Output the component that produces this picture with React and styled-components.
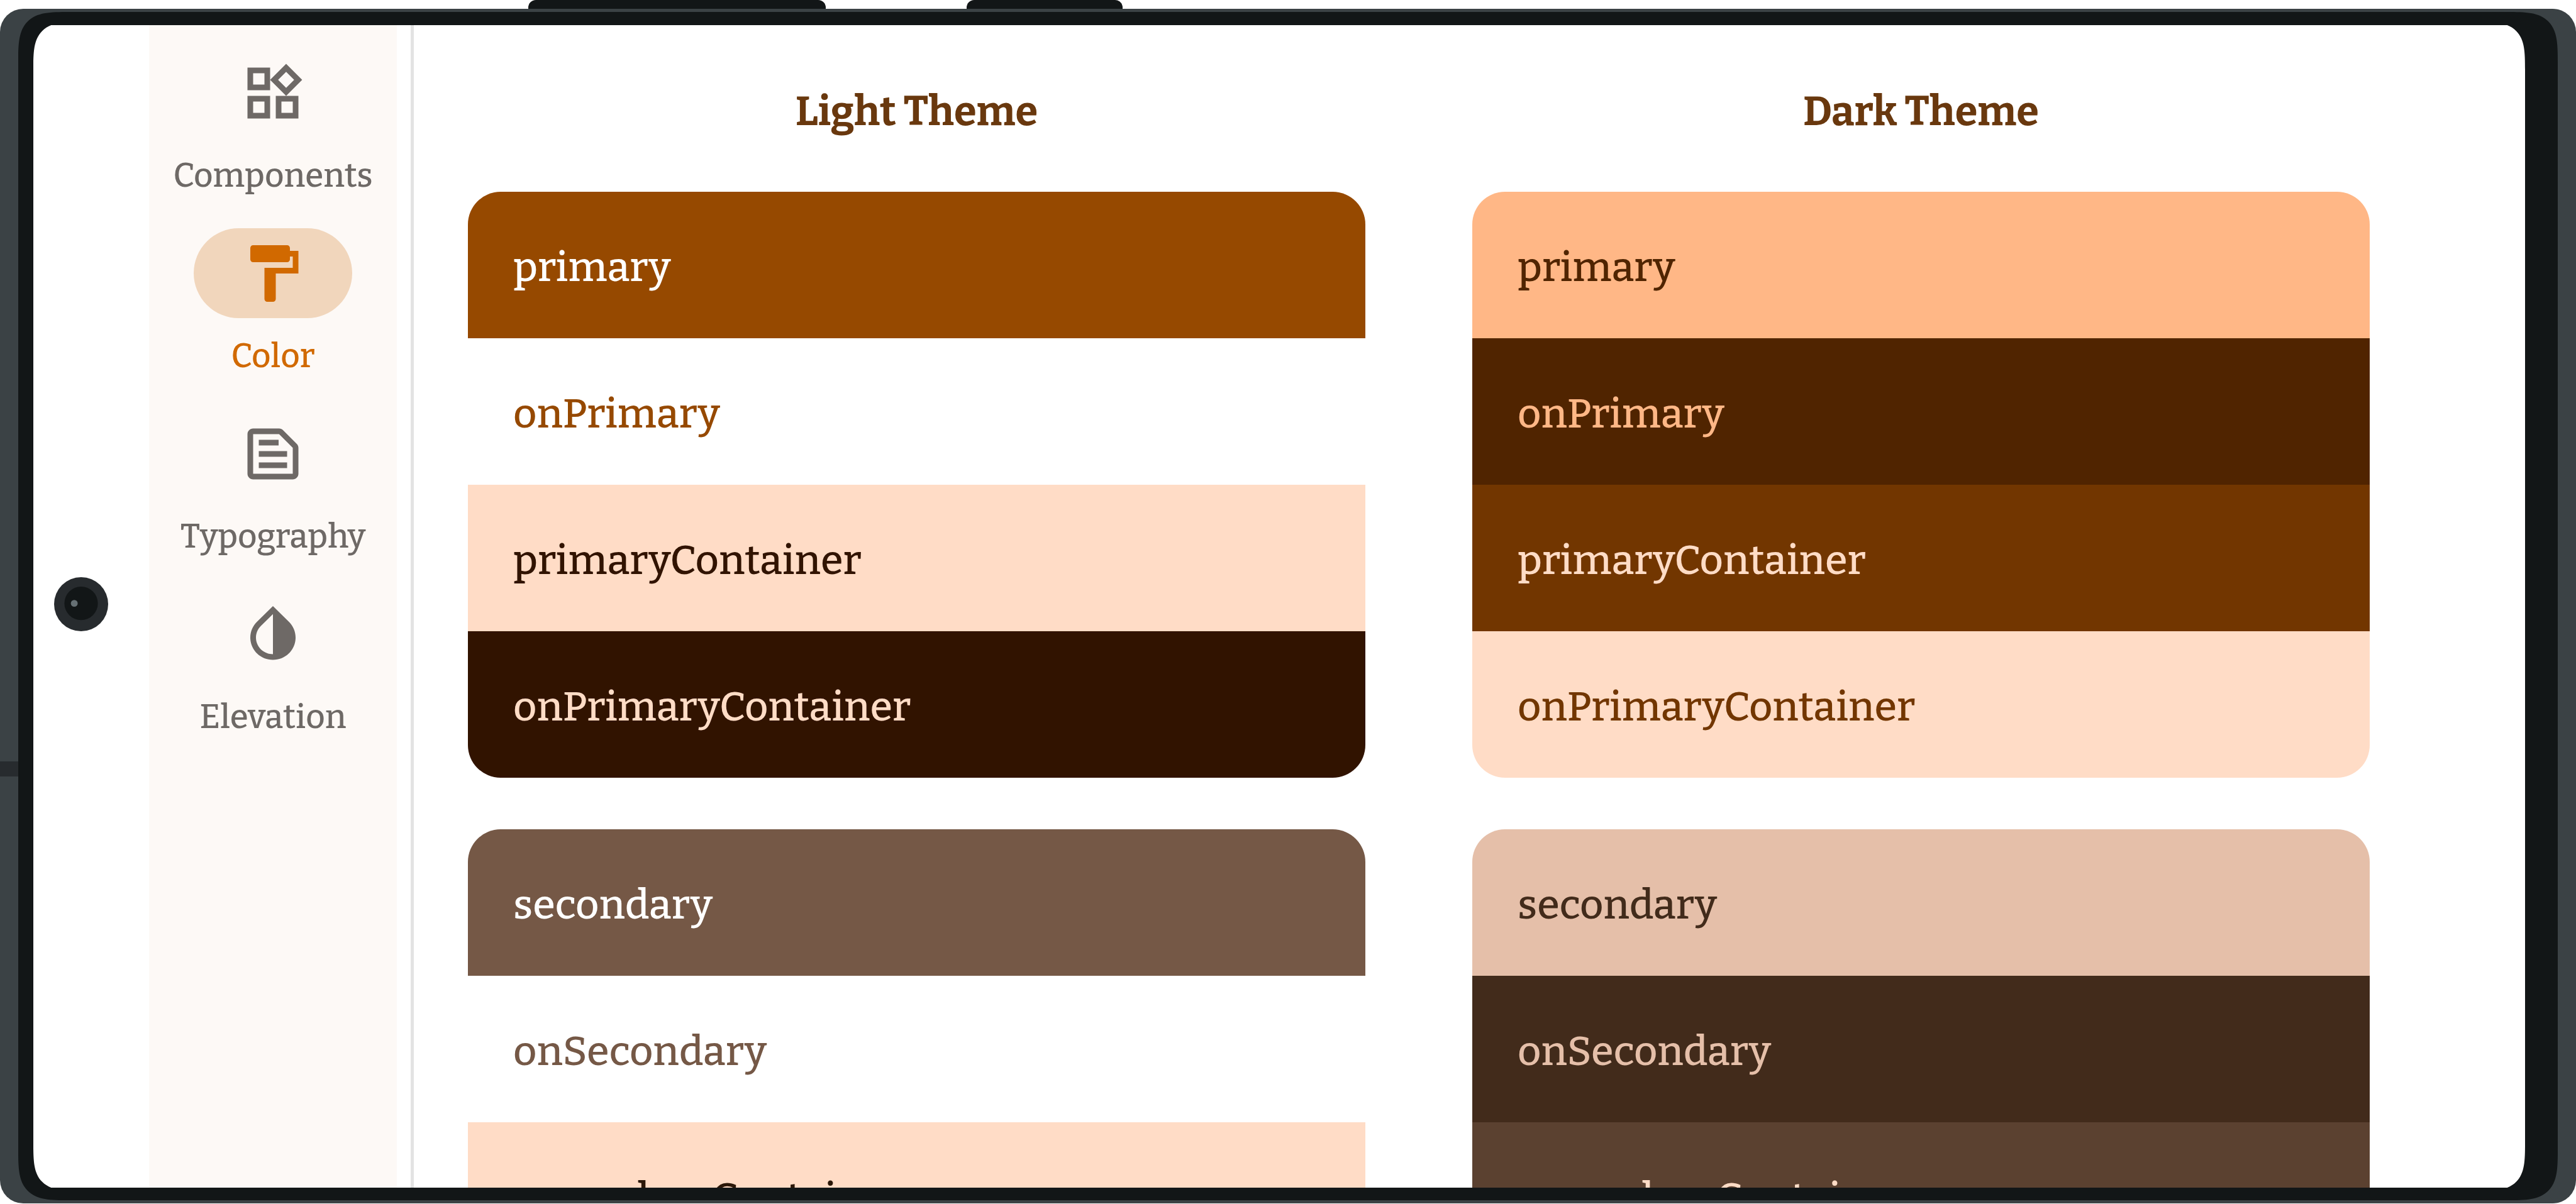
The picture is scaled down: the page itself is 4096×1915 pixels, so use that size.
import React from "react";
import styled, { createGlobalStyle } from "styled-components";

const GlobalStyle = createGlobalStyle`
  *, *::before, *::after { box-sizing: border-box; }
  body {
    margin: 0;
    background: #ffffff;
    font-family: "Roboto Slab", Bitter, "Roboto Serif", "DejaVu Serif", serif;
    font-weight: 500;
  }
`;

/* ---------- Device ---------- */

const Device = styled.div`
  display: flex;
  flex-direction: column;
  height: 100vh;
  overflow: hidden;
  padding-bottom: 1px;
`;

const SideKeys = styled.div`
  display: flex;
  flex: none;
  gap: 224px;
  height: 14px;
  padding-left: 840px;
`;

const SideKey = styled.span`
  width: ${({ $width }) => $width}px;
  border-radius: 12px 12px 0 0;
  background: #121617;
`;

const Frame = styled.div`
  position: relative;
  display: flex;
  flex: 1;
  min-height: 0;
  padding: 5px 29px;
  border-radius: 37px;
  background: #3b4245;
`;

const AntennaBand = styled.span`
  position: absolute;
  top: 63%;
  left: 0;
  width: 29px;
  height: 24px;
  background: #272b2e;
`;

const Bezel = styled.div`
  display: flex;
  flex: 1;
  min-width: 0;
  padding: 21px 52px 20px 24px;
  border-radius: 51px;
  background: #121617;

  @supports (corner-shape: squircle) {
    border-radius: 81px;
    corner-shape: superellipse(1.75);
  }
`;

const Viewport = styled.div`
  display: flex;
  flex: 1;
  min-width: 0;
  overflow: hidden;
`;

const Screen = styled.div`
  display: flex;
  flex: 1;
  min-width: 0;
  margin: -5px 0;
  padding: 5px 0;
  overflow: hidden;
  border-radius: 48px;
  background: #ffffff;

  @supports (corner-shape: squircle) {
    border-radius: 76px;
    corner-shape: superellipse(1.75);
  }
`;

const CameraGutter = styled.div`
  display: flex;
  flex: none;
  align-items: center;
  width: 184px;
  padding: 0 0 8px 33px;
`;

const Camera = () => (
  <svg width="86" height="86" viewBox="0 0 126 126" aria-hidden="true">
    <circle cx="63" cy="63" r="63" fill="#272b2e" />
    <circle cx="63" cy="61" r="39" fill="#121617" />
    <circle cx="47" cy="61" r="8" fill="#667074" />
  </svg>
);

/* ---------- Navigation rail ---------- */

const Rail = styled.nav`
  display: flex;
  flex: none;
  flex-direction: column;
  gap: 48px;
  width: 394px;
  margin: -5px 0;
  padding-top: 41px;
  background: #fdf9f6;
`;

const RailLink = styled.a`
  display: flex;
  flex-direction: column;
  align-items: center;
  gap: 24px;
  color: ${({ $active }) => ($active ? "#d16900" : "#6e6966")};
  font-size: 53px;
  line-height: 72px;
  text-decoration: none;
`;

const Indicator = styled.span`
  display: flex;
  align-items: center;
  justify-content: center;
  width: 252px;
  height: 143px;
  border-radius: 72px;
  background: ${({ $active }) => ($active ? "#f1d6bc" : "transparent")};
`;

const RailIcon = styled.svg`
  width: 108px;
  height: 108px;
  fill: currentColor;
`;

const Divider = styled.div`
  flex: none;
  width: 5px;
  margin: -5px 0 -5px 22px;
  background: #e3e3e3;
`;

/* ---------- Swatches ---------- */

const Content = styled.main`
  display: flex;
  flex: 1;
  align-items: flex-start;
  gap: 170px;
  min-width: 0;
  padding: 0 247px 0 86px;
`;

const Column = styled.section`
  display: flex;
  flex: 1;
  flex-direction: column;
  gap: 82px;
  min-width: 0;
`;

const Title = styled.h2`
  margin: 0;
  padding: 97px 0 6px;
  color: #69380e;
  font-size: 65px;
  font-weight: 700;
  line-height: 80px;
  text-align: center;
`;

const Group = styled.ul`
  margin: 0;
  padding: 0;
  overflow: hidden;
  border-radius: 52px;
  list-style: none;
`;

const Swatch = styled.li`
  display: flex;
  align-items: center;
  height: 233px;
  padding: 6px 72px 0;
  background: ${({ $fill }) => $fill};
  color: ${({ $ink }) => $ink};
  font-size: 65px;
  line-height: 80px;
`;

const destinations = [
  {
    label: "Components",
    path: "M16.66 4.52l2.83 2.83-2.83 2.83-2.83-2.83 2.83-2.83M9 5v4H5V5h4m10 10v4h-4v-4h4M9 15v4H5v-4h4m7.66-13.31L11 7.34 16.66 13l5.66-5.66-5.66-5.65zM11 3H3v8h8V3zm10 10h-8v8h8v-8zm-10 0H3v8h8v-8z",
  },
  {
    label: "Color",
    active: true,
    path: "M18 4V3c0-.55-.45-1-1-1H5c-.55 0-1 .45-1 1v4c0 .55.45 1 1 1h12c.55 0 1-.45 1-1V6h1v4H9v11c0 .55.45 1 1 1h2c.55 0 1-.45 1-1v-9h8V4h-3z",
  },
  {
    label: "Typography",
    path: "M14.17 5L19 9.83V19H5V5h9.17m0-2H5c-1.1 0-2 .9-2 2v14c0 1.1.9 2 2 2h14c1.1 0 2-.9 2-2V9.83c0-.53-.21-1.04-.59-1.41l-4.83-4.83c-.37-.38-.88-.59-1.41-.59zM7 15h10v2H7v-2zm0-4h10v2H7v-2zm0-4h7v2H7V7z",
  },
  {
    label: "Elevation",
    path: "M12 4.81V19c-3.31 0-6-2.63-6-5.87 0-1.56.62-3.03 1.75-4.14L12 4.81M12 2L6.35 7.56C4.9 8.99 4 10.96 4 13.13 4 17.48 7.58 21 12 21s8-3.52 8-7.87c0-2.17-.9-4.13-2.35-5.56L12 2z",
  },
];

const themes = [
  {
    title: "Light Theme",
    groups: [
      [
        { name: "primary", fill: "#964900", ink: "#ffffff" },
        { name: "onPrimary", fill: "#ffffff", ink: "#964900" },
        { name: "primaryContainer", fill: "#ffdcc6", ink: "#311300" },
        { name: "onPrimaryContainer", fill: "#311300", ink: "#ffdcc6" },
      ],
      [
        { name: "secondary", fill: "#755846", ink: "#ffffff" },
        { name: "onSecondary", fill: "#ffffff", ink: "#755846" },
        { name: "secondaryContainer", fill: "#ffdcc6", ink: "#2b1708" },
      ],
    ],
  },
  {
    title: "Dark Theme",
    groups: [
      [
        { name: "primary", fill: "#ffb786", ink: "#502400" },
        { name: "onPrimary", fill: "#502400", ink: "#ffb786" },
        { name: "primaryContainer", fill: "#723600", ink: "#ffdcc6" },
        { name: "onPrimaryContainer", fill: "#ffdcc6", ink: "#723600" },
      ],
      [
        { name: "secondary", fill: "#e5bfa9", ink: "#422b1b" },
        { name: "onSecondary", fill: "#422b1b", ink: "#e5bfa9" },
        { name: "secondaryContainer", fill: "#5b4130", ink: "#ffdcc6" },
      ],
    ],
  },
];

export default function App() {
  return (
    <Device>
      <GlobalStyle />
      <SideKeys>
        <SideKey $width={473} />
        <SideKey $width={248} />
      </SideKeys>
      <Frame>
        <AntennaBand />
        <Bezel>
          <Viewport>
            <Screen>
              <CameraGutter>
                <Camera />
              </CameraGutter>
              <Rail>
                {destinations.map(({ label, path, active }) => (
                  <RailLink
                    key={label}
                    href={`#${label.toLowerCase()}`}
                    $active={active}
                    aria-current={active ? "page" : undefined}
                  >
                    <Indicator $active={active}>
                      <RailIcon viewBox="0 0 24 24" aria-hidden="true">
                        <path d={path} />
                      </RailIcon>
                    </Indicator>
                    {label}
                  </RailLink>
                ))}
              </Rail>
              <Divider />
              <Content>
                {themes.map(({ title, groups }) => (
                  <Column key={title}>
                    <Title>{title}</Title>
                    {groups.map((swatches) => (
                      <Group key={swatches[0].name}>
                        {swatches.map(({ name, fill, ink }) => (
                          <Swatch key={name} $fill={fill} $ink={ink}>
                            {name}
                          </Swatch>
                        ))}
                      </Group>
                    ))}
                  </Column>
                ))}
              </Content>
            </Screen>
          </Viewport>
        </Bezel>
      </Frame>
    </Device>
  );
}
